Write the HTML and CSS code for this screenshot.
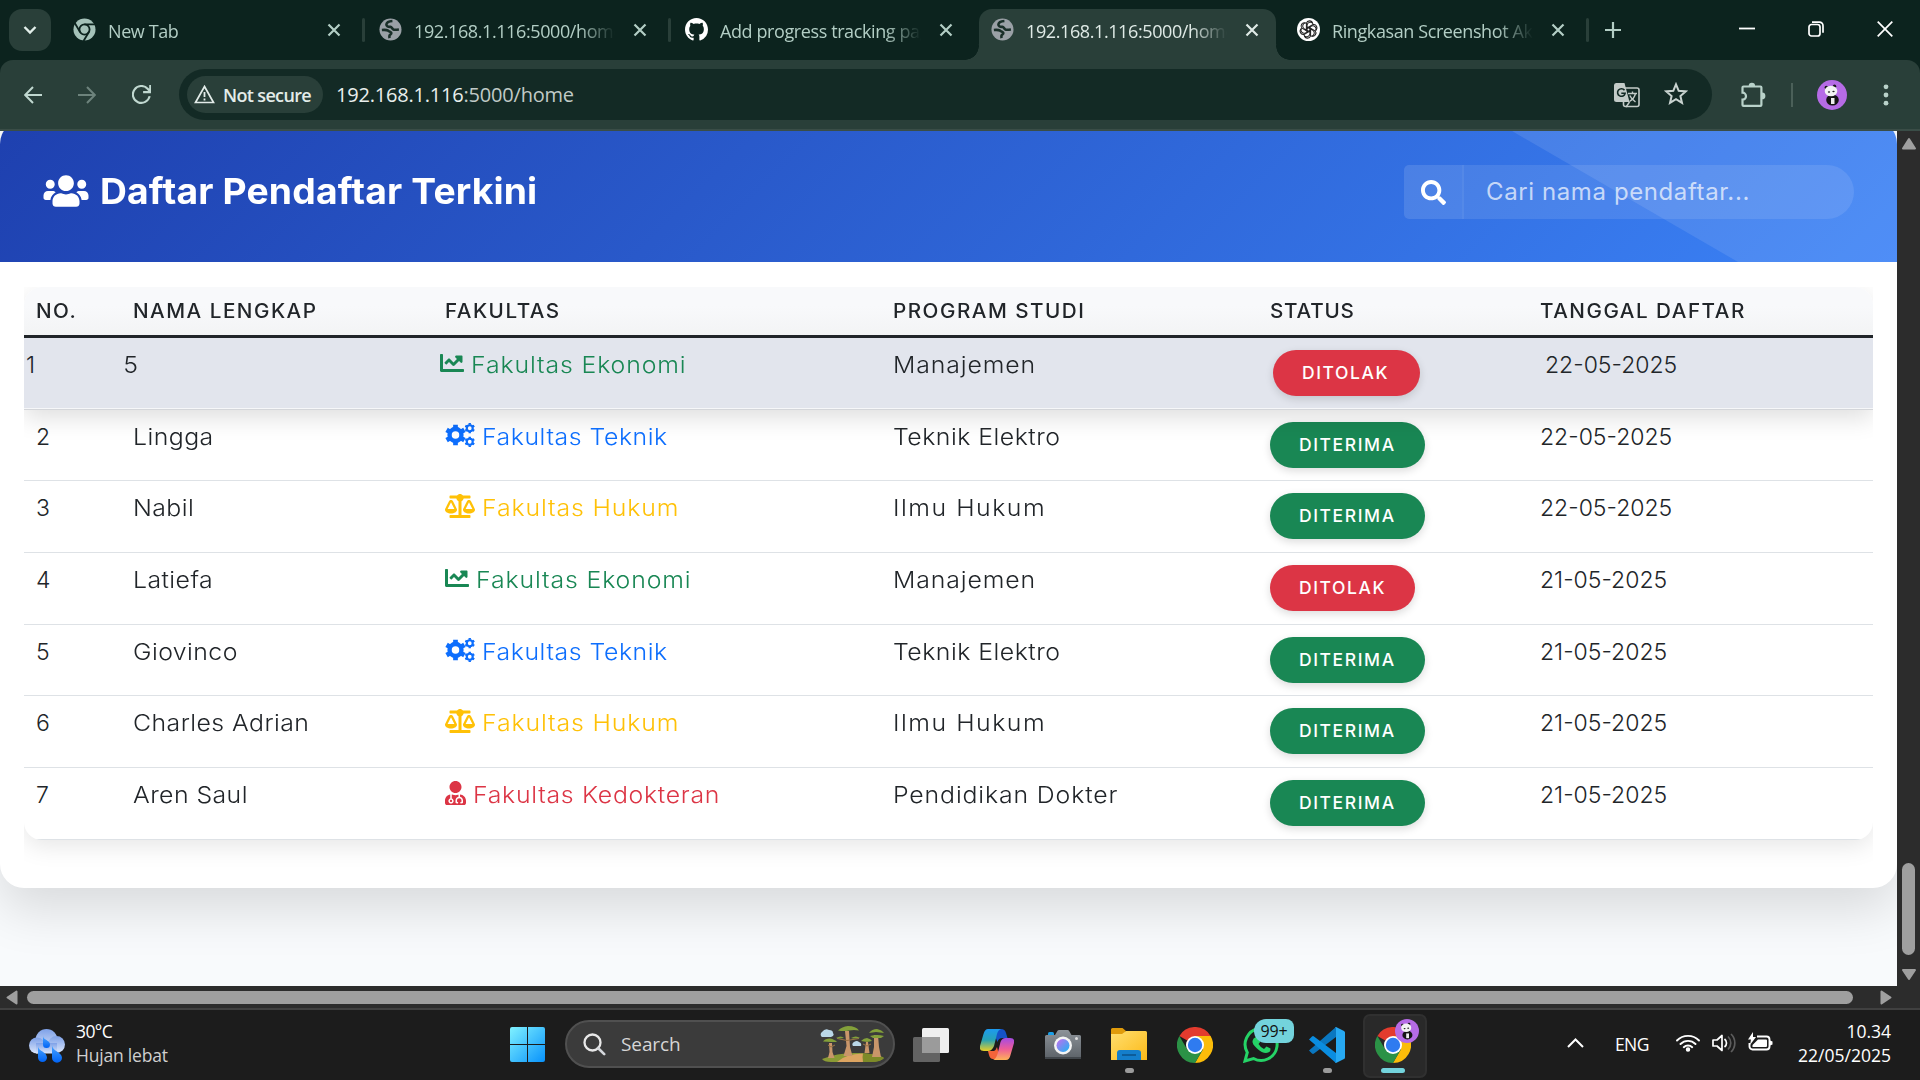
FILE: index.html
```html
<!DOCTYPE html>
<html lang="id">
<head>
<meta charset="utf-8">
<title>Daftar Pendaftar Terkini</title>
<link rel="stylesheet" href="styles.css">
</head>
<body>
<svg class="defs" aria-hidden="true">
  <defs>
    <symbol id="close" viewBox="0 0 14 14"><path d="M1.500 1.500l11 11M12.500 1.500l-11 11" stroke="currentColor" stroke-width="2.200" fill="none"/></symbol>
    <symbol id="globe" viewBox="0 0 24 24"><circle cx="12" cy="12" r="11.500" fill="#9aa0a6"/><path d="M14 3.200c-3 .2-6 1.500-6.300 3.600-.2 1.800 1.800 2.600 4.300 2.400 1.500 0 1.500 2.600 3.500 3 1.800.3 3.800 0 5.300-.2M3 12.500c2.500-.2 5-.3 6.500.6 1.200 1.200 2.500 1.300 3.300 2.300.6 1.400-1.300 1.800-1.800 2.800-.3 1-.2 1.800 0 2.800" fill="none" stroke="#1a2f29" stroke-width="2.700"/></symbol>
    <symbol id="line" viewBox="0 0 512 512"><path fill="currentColor" d="M496 384H64V80c0-8.840-7.160-16-16-16H16C7.160 64 0 71.160 0 80v336c0 17.670 14.330 32 32 32h464c8.840 0 16-7.160 16-16v-32c0-8.840-7.160-16-16-16zM464 96H345.940c-21.380 0-32.090 25.850-16.970 40.970l32.400 32.400L288 242.750l-73.370-73.370c-12.500-12.500-32.760-12.500-45.250 0l-68.690 68.690c-6.250 6.250-6.250 16.380 0 22.630l22.620 22.620c6.250 6.250 16.380 6.250 22.630 0L192 237.250l73.370 73.370c12.500 12.500 32.760 12.500 45.250 0l96-96 32.400 32.400c15.120 15.120 40.970 4.410 40.970-16.970V112c.01-8.840-7.150-16-15.990-16z"/></symbol>
    <symbol id="scale" viewBox="0 0 640 512"><path fill="currentColor" d="M256 336h-.02c0-16.180 1.340-8.730-85.050-181.510-17.650-35.290-68.190-35.360-85.870 0C-2.060 328.750.02 320.330.02 336H0c0 44.180 57.310 80 128 80s128-35.820 128-80zM128 176l72 144H56l72-144zm511.980 160c0-16.180 1.340-8.730-85.050-181.510-17.650-35.290-68.190-35.360-85.870 0-87.120 174.260-85.040 165.840-85.040 181.510H384c0 44.180 57.310 80 128 80s128-35.820 128-80h-.02zM440 320l72-144 72 144H440zm88 128H352V153.250c23.510-10.290 41.160-31.480 46.390-57.250H528c8.840 0 16-7.160 16-16V48c0-8.840-7.160-16-16-16H383.640C369.040 12.680 346.090 0 320 0s-49.040 12.680-63.640 32H112c-8.840 0-16 7.160-16 16v32c0 8.840 7.160 16 16 16h129.610c5.230 25.760 22.870 46.960 46.390 57.250V448H112c-8.840 0-16 7.160-16 16v32c0 8.840 7.160 16 16 16h416c8.840 0 16-7.160 16-16v-32c0-8.840-7.160-16-16-16z"/></symbol>
    <symbol id="gear" viewBox="-12 -12 24 24"><g fill="none" stroke="currentColor"><circle r="6.800" stroke-width="5"/><path d="M0-8V-11.800M0 8V11.800M6.930-4L10.200-5.900M6.930 4L10.200 5.900M-6.930-4L-10.200-5.900M-6.930 4L-10.200 5.900" stroke-width="5.400"/></g></symbol>
    <symbol id="gears" viewBox="0 0 30 24"><use href="#gear" x="0" y="1" width="21" height="22"/><use href="#gear" x="19.500" y="0" width="10.500" height="10.500"/><use href="#gear" x="19.500" y="13.500" width="10.500" height="10.500"/></symbol>
    <symbol id="doctor" viewBox="0 0 448 512"><path fill="currentColor" d="M224 256c70.700 0 128-57.300 128-128S294.700 0 224 0 96 57.300 96 128s57.300 128 128 128zM104 424c0 13.300 10.700 24 24 24s24-10.700 24-24-10.700-24-24-24-24 10.700-24 24zm216-135.400v49c36.500 7.400 64 39.800 64 78.400v41.700c0 7.600-5.400 14.200-12.900 15.700l-32.200 6.400c-4.300.9-8.500-1.900-9.400-6.300l-3.100-15.700c-.9-4.300 1.900-8.600 6.300-9.400l19.300-3.900V416c0-62.800-96-65.100-96 1.900v26.700l19.300 3.900c4.300.9 7.100 5.100 6.300 9.400l-3.100 15.700c-.9 4.300-5.100 7.100-9.400 6.300l-31.200-4.200c-7.900-1.100-13.800-7.800-13.800-15.900V416c0-38.600 27.500-70.900 64-78.400v-45.200c-2.200.7-4.400 1.100-6.600 1.900-18 6.300-37.300 9.800-57.400 9.800s-39.400-3.500-57.400-9.800c-7.400-2.600-14.900-4.200-22.600-5.200v81.600c23.100 6.900 40 28.100 40 53.400 0 30.900-25.100 56-56 56s-56-25.100-56-56c0-25.300 16.900-46.500 40-53.400v-80.400C48.500 301 0 355.800 0 422.400v44.800C0 491.900 20.100 512 44.800 512h358.400c24.700 0 44.800-20.100 44.800-44.800v-44.800c0-72-56.800-130.300-128-133.800z"/></symbol>
    <symbol id="panda" viewBox="0 0 30 30"><circle cx="15" cy="15" r="15" fill="#b66be6"/><ellipse cx="15.500" cy="20" rx="6.300" ry="5.500" fill="#151515"/><path d="M14 18h3.500v6H14z" fill="#eee"/><circle cx="9.300" cy="7.500" r="1.700" fill="#151515"/><circle cx="17.500" cy="6.300" r="1.700" fill="#151515"/><ellipse cx="14" cy="11" rx="6.300" ry="5.300" fill="#f3f3f3"/><ellipse cx="12" cy="12" rx="1.200" ry=".8" fill="#222"/><ellipse cx="16.500" cy="11.500" rx="1.200" ry=".8" fill="#222"/></symbol>
    <symbol id="chrome" viewBox="0 0 36 36"><path d="M18 18L2.400 9A18 18 0 0 1 33.600 9H18z" fill="#e33b2e"/><path d="M18 9H33.600A18 18 0 0 1 18 36l7.800-13.500z" fill="#fbbc09"/><path d="M25.800 22.500L18 36A18 18 0 0 1 2.400 9l7.800 13.500z" fill="#2b9246"/><circle cx="18" cy="18" r="9" fill="#fff"/><circle cx="18" cy="18" r="7.200" fill="#2f7bf0"/></symbol>
    <linearGradient id="win" x1="0" y1="0" x2="1" y2="1"><stop offset="0" stop-color="#80f2ff"/><stop offset="1" stop-color="#0892fb"/></linearGradient>
    <linearGradient id="cloud" x1="0" y1="0" x2="0" y2="1"><stop offset="0" stop-color="#7ea1e8"/><stop offset="1" stop-color="#dbe6fb"/></linearGradient>
    <linearGradient id="drop" x1="0" y1="0" x2="0" y2="1"><stop offset="0" stop-color="#4aa5ff"/><stop offset="1" stop-color="#0063f5"/></linearGradient>
    <linearGradient id="copA" x1="0" y1="0" x2="0" y2="1"><stop offset="0" stop-color="#1d9af0"/><stop offset=".5" stop-color="#27a3b5"/><stop offset="1" stop-color="#e9cf25"/></linearGradient>
    <linearGradient id="copB" x1="0" y1="0" x2="0" y2="1"><stop offset="0" stop-color="#a54be4"/><stop offset=".5" stop-color="#ee5c98"/><stop offset="1" stop-color="#ffb257"/></linearGradient>
    <linearGradient id="lens" x1="0" y1="0" x2="1" y2="1"><stop offset="0" stop-color="#c76cf0"/><stop offset="1" stop-color="#18b6f2"/></linearGradient>
    <linearGradient id="folder" x1="0" y1="0" x2="1" y2="1"><stop offset="0" stop-color="#ffdf70"/><stop offset="1" stop-color="#fcb917"/></linearGradient>
    <linearGradient id="body" x1="0" y1="0" x2="0" y2="1"><stop offset="0" stop-color="#8d9399"/><stop offset="1" stop-color="#5c6268"/></linearGradient>
  </defs>
</svg>

<header class="tabstrip">
  <button class="tab-menu"><svg width="14" height="10" viewBox="0 0 14 10"><path d="M1.500 2l5.500 5.500L12.500 2" fill="none" stroke="#e2efea" stroke-width="2.400"/></svg></button>
  <div class="tab">
    <svg class="fav" viewBox="0 0 24 24"><circle cx="12" cy="12" r="11.500" fill="#a5c2b9"/><circle cx="12" cy="12" r="5.300" fill="none" stroke="#0c231e" stroke-width="1.900"/><path d="M12 6.700H23M7.400 14.700L2 5.500M16.600 14.700L11 24" stroke="#0c231e" stroke-width="1.900"/></svg>
    <span class="tab-title">New Tab</span><svg class="x"><use href="#close"/></svg>
  </div>
  <div class="tab sep">
    <svg class="fav"><use href="#globe"/></svg>
    <span class="tab-title">192.168.1.116:5000/home</span><svg class="x"><use href="#close"/></svg>
  </div>
  <div class="tab sep">
    <svg class="fav" viewBox="0 0 16 16"><path fill="#fff" d="M8 0C3.580 0 0 3.580 0 8c0 3.540 2.290 6.530 5.470 7.590.4.070.55-.17.55-.38 0-.19-.01-.82-.01-1.490-2.010.37-2.530-.49-2.690-.94-.09-.23-.48-.94-.82-1.130-.28-.15-.68-.52-.01-.53.63-.01 1.080.58 1.230.82.72 1.210 1.870.87 2.330.66.07-.52.28-.87.51-1.070-1.780-.2-3.640-.89-3.640-3.950 0-.87.31-1.590.82-2.150-.08-.2-.36-1.020.08-2.120 0 0 .67-.21 2.200.82.64-.18 1.320-.27 2-.27s1.360.09 2 .27c1.530-1.040 2.200-.82 2.200-.82.44 1.100.16 1.920.08 2.120.51.56.82 1.270.82 2.150 0 3.070-1.870 3.750-3.650 3.950.29.25.54.73.54 1.480 0 1.070-.01 1.930-.01 2.200 0 .21.15.46.55.38A8.010 8.010 0 0 0 16 8c0-4.420-3.580-8-8-8z"/></svg>
    <span class="tab-title">Add progress tracking page</span><svg class="x"><use href="#close"/></svg>
  </div>
  <div class="tab active">
    <svg class="fav"><use href="#globe"/></svg>
    <span class="tab-title">192.168.1.116:5000/home</span><svg class="x"><use href="#close"/></svg>
  </div>
  <div class="tab">
    <svg class="fav" viewBox="-12 -12 24 24"><circle r="12" fill="#fff"/><g fill="none" stroke="#222" stroke-width="1.100"><path id="petal" d="M-1.500 3.400V-4.500A3.400 3.400 0 0 1 4.800-5.900M-1.500-1.700L4.700-5.200A3.300 3.300 0 0 1 7.600.5"/><use href="#petal" transform="rotate(60)"/><use href="#petal" transform="rotate(120)"/><use href="#petal" transform="rotate(180)"/><use href="#petal" transform="rotate(240)"/><use href="#petal" transform="rotate(300)"/></g></svg>
    <span class="tab-title">Ringkasan Screenshot Aktivitas</span><svg class="x"><use href="#close"/></svg>
  </div>
  <div class="new-tab"><svg width="16" height="16" viewBox="0 0 16 16"><path d="M8 0v16M0 8h16" stroke="#b3cec5" stroke-width="2.200"/></svg></div>
  <div class="win-buttons">
    <svg width="16" height="16" viewBox="0 0 16 16"><path d="M0 7.500h16" stroke="#fff" stroke-width="1.800"/></svg>
    <svg width="16" height="16" viewBox="0 0 16 16" fill="none" stroke="#fff" stroke-width="1.700"><rect x="1" y="3.500" width="11" height="11.500" rx="2.500"/><path d="M4 1.200h7.500a3.500 3.500 0 0 1 3.500 3.500v7"/></svg>
    <svg width="16" height="16" viewBox="0 0 16 16"><path d="M.7.7l14.600 14.600M15.300.7L.7 15.300" stroke="#fff" stroke-width="1.700"/></svg>
  </div>
</header>

<nav class="toolbar">
  <svg class="nav back" viewBox="0 0 18 18"><path d="M18 9H1.500M9 1L1.200 9 9 17" fill="none" stroke="#c0d8d0" stroke-width="2"/></svg>
  <svg class="nav forward" viewBox="0 0 18 18"><path d="M0 9h16.500M9 1l7.800 8L9 17" fill="none" stroke="#6d837c" stroke-width="2"/></svg>
  <svg class="nav reload" viewBox="0 0 18 18"><path d="M16.700 10.500A8 8 0 1 1 14.800 3.600L17 6M17.300 0v6.700h-6.800" fill="none" stroke="#c0d8d0" stroke-width="2"/></svg>
  <div class="omnibox">
    <div class="chip"><svg width="21" height="19" viewBox="0 0 21 19"><path d="M10.500 1.500L19.500 17.500H1.500z" fill="none" stroke="#e3ece9" stroke-width="1.700"/><path d="M10.500 7v5M10.500 13.500v2" stroke="#e3ece9" stroke-width="1.800"/></svg><span>Not secure</span></div>
    <div class="url">192.168.1.116<span>:5000/home</span></div>
    <svg class="translate" width="26" height="26" viewBox="0 0 26 26"><rect x="9.500" y="6" width="15.500" height="18.500" rx="2" fill="none" stroke="#c3cbc8" stroke-width="1.600"/><path d="M2 1h8.500l5 19H2.500A2.500 2.500 0 0 1 0 17.500V3.200A2.200 2.200 0 0 1 2 1z" fill="#c3cbc8"/><path d="M10.500 8.300a3.800 3.800 0 1 0 .6 3H7.300" fill="none" stroke="#132a25" stroke-width="1.600"/><path d="M14 11.500h9M18.500 9.500v2M21.500 11.500c-1 4-3.500 6.500-6 8M15.800 13.500c1 2.500 3 4.500 5.700 6.500M15.500 20l-3.500 5" fill="none" stroke="#c3cbc8" stroke-width="1.400"/></svg>
    <svg class="star" width="24" height="23" viewBox="0 0 24 23"><path d="M12 2.300l2.700 6.500 7 .6-5.300 4.600 1.600 6.900-6-3.700-6 3.700 1.600-6.900L2.300 9.400l7-.6z" fill="none" stroke="#c9d3d0" stroke-width="2"/></svg>
  </div>
  <svg class="puzzle" width="26" height="26" viewBox="0 0 26 26"><path d="M2.500 5.500a1 1 0 0 1 1-1H20.400a1 1 0 0 1 1 1v17.400a1 1 0 0 1-1 1H3.500a1 1 0 0 1-1-1v-5.200a3.500 3.500 0 0 0 0-7z" fill="none" stroke="#b9d2ca" stroke-width="2.200"/><path d="M8.700 4a3.200 3.200 0 0 1 6.400 0zM22 10.500a3.400 3.400 0 0 1 0 6.800z" fill="#b9d2ca"/></svg>
  <i class="bar"></i>
  <svg class="avatar" width="30" height="30"><use href="#panda"/></svg>
  <svg class="dots" width="6" height="22" viewBox="0 0 6 22" fill="#b9d2ca"><circle cx="3" cy="2.800" r="2.400"/><circle cx="3" cy="11" r="2.400"/><circle cx="3" cy="19.200" r="2.400"/></svg>
</nav>

<main class="viewport">
  <div class="page">
    <section class="card">
      <div class="card-head">
        <h1><svg width="46" height="36" viewBox="0 0 640 512"><path fill="#fff" d="M96 224c35.300 0 64-28.700 64-64s-28.700-64-64-64-64 28.700-64 64 28.700 64 64 64zm448 0c35.300 0 64-28.700 64-64s-28.700-64-64-64-64 28.700-64 64 28.700 64 64 64zm32 32h-64c-17.600 0-33.500 7.100-45.100 18.600 40.300 22.100 68.900 62 75.100 109.400h66c17.700 0 32-14.300 32-32v-32c0-35.300-28.700-64-64-64zm-256 0c61.900 0 112-50.100 112-112S381.900 32 320 32 208 82.100 208 144s50.100 112 112 112zm76.800 32h-8.300c-20.800 10-43.900 16-68.500 16s-47.600-6-68.500-16h-8.300C179.600 288 128 339.600 128 403.200V432c0 26.500 21.500 48 48 48h288c26.500 0 48-21.500 48-48v-28.800c0-63.600-51.600-115.200-115.200-115.200zm-223.700-13.400C161.500 263.100 145.600 256 128 256H64c-35.300 0-64 28.700-64 64v32c0 17.700 14.300 32 32 32h65.900c6.300-47.400 34.900-87.300 75.200-109.400z"/></svg><span>Daftar Pendaftar Terkini</span></h1>
        <div class="search">
          <div class="search-icon"><svg width="25" height="25" viewBox="0 0 512 512"><path fill="#fff" d="M505 442.700L405.300 343c-4.500-4.500-10.600-7-17-7H372c27.600-35.300 44-79.700 44-128C416 93.100 322.900 0 208 0S0 93.100 0 208s93.100 208 208 208c48.300 0 92.700-16.400 128-44v16.300c0 6.400 2.500 12.500 7 17l99.700 99.700c9.400 9.400 24.600 9.400 33.900 0l28.300-28.300c9.400-9.400 9.400-24.600.1-34zM208 336c-70.700 0-128-57.200-128-128 0-70.700 57.200-128 128-128 70.700 0 128 57.200 128 128 0 70.700-57.200 128-128 128z"/></svg></div>
          <div class="search-field">Cari nama pendaftar...</div>
        </div>
      </div>
      <div class="table-wrap">
        <div class="table">
          <div class="row head"><div>NO.</div><div>NAMA LENGKAP</div><div>FAKULTAS</div><div>PROGRAM STUDI</div><div class="tight">STATUS</div><div>TANGGAL DAFTAR</div></div>
          <div class="row hover"><div>1</div><div class="name">5</div><div class="eko"><svg><use href="#line"/></svg><span>Fakultas Ekonomi</span></div><div class="prog">Manajemen</div><div><b class="badge no">DITOLAK</b></div><div class="date">22-05-2025</div></div>
          <div class="row"><div>2</div><div class="name">Lingga</div><div class="tek"><svg><use href="#gears"/></svg><span>Fakultas Teknik</span></div><div class="prog narrow">Teknik Elektro</div><div><b class="badge yes">DITERIMA</b></div><div class="date">22-05-2025</div></div>
          <div class="row"><div>3</div><div class="name">Nabil</div><div class="huk"><svg><use href="#scale"/></svg><span>Fakultas Hukum</span></div><div class="prog wide">Ilmu Hukum</div><div><b class="badge yes">DITERIMA</b></div><div class="date">22-05-2025</div></div>
          <div class="row"><div>4</div><div class="name">Latiefa</div><div class="eko"><svg><use href="#line"/></svg><span>Fakultas Ekonomi</span></div><div class="prog">Manajemen</div><div><b class="badge no">DITOLAK</b></div><div class="date">21-05-2025</div></div>
          <div class="row"><div>5</div><div class="name">Giovinco</div><div class="tek"><svg><use href="#gears"/></svg><span>Fakultas Teknik</span></div><div class="prog narrow">Teknik Elektro</div><div><b class="badge yes">DITERIMA</b></div><div class="date">21-05-2025</div></div>
          <div class="row"><div>6</div><div class="name">Charles Adrian</div><div class="huk"><svg><use href="#scale"/></svg><span>Fakultas Hukum</span></div><div class="prog wide">Ilmu Hukum</div><div><b class="badge yes">DITERIMA</b></div><div class="date">21-05-2025</div></div>
          <div class="row"><div>7</div><div class="name">Aren Saul</div><div class="ked"><svg><use href="#doctor"/></svg><span>Fakultas Kedokteran</span></div><div class="prog">Pendidikan Dokter</div><div><b class="badge yes">DITERIMA</b></div><div class="date">21-05-2025</div></div>
        </div>
      </div>
    </section>
  </div>
  <div class="vscroll">
    <svg width="16" height="13" viewBox="0 0 16 13"><path d="M8 2l6 9.500H2z" fill="#9f9f9f" stroke="#9f9f9f" stroke-width="2" stroke-linejoin="round"/></svg>
    <i></i>
    <svg width="16" height="13" viewBox="0 0 16 13"><path d="M8 11l6-9H2z" fill="#9f9f9f" stroke="#9f9f9f" stroke-width="2" stroke-linejoin="round"/></svg>
  </div>
</main>
<div class="hscroll">
  <svg width="12" height="15" viewBox="0 0 12 15"><path d="M1.500 7.500L10.500 1.500v12z" fill="#9f9f9f" stroke="#9f9f9f" stroke-width="2" stroke-linejoin="round"/></svg>
  <i></i>
  <svg width="12" height="15" viewBox="0 0 12 15"><path d="M10.500 7.500L1.500 1.500v12z" fill="#9f9f9f" stroke="#9f9f9f" stroke-width="2" stroke-linejoin="round"/></svg>
</div>

<footer class="taskbar">
  <div class="weather">
    <svg width="36" height="34" viewBox="0 0 36 34"><g fill="url(#cloud)"><circle cx="17.500" cy="11" r="11"/><circle cx="8" cy="16.500" r="8"/><circle cx="27.500" cy="15.500" r="8.500"/><rect x="7" y="14" width="21" height="10.500"/></g><g fill="url(#drop)"><path d="M14 7c0 4 7 4 7 8.500a3.500 3.500 0 0 1-7 0z"/><path d="M9 17c0 5 9 6 9 11.500a4.500 4.500 0 0 1-9 0z"/><path d="M23 16c0 6 10 7 10 12.800a5 5 0 0 1-10 0z"/></g></svg>
    <div><div class="temp">30°C</div><div class="cond">Hujan lebat</div></div>
  </div>
  <div class="apps">
    <div class="app"><svg width="35" height="35" viewBox="0 0 35 35"><path d="M2 0h15v17H0V2a2 2 0 0 1 2-2zM18 0h15a2 2 0 0 1 2 2v15H18zM0 18h17v17H2a2 2 0 0 1-2-2zM18 18h17v15a2 2 0 0 1-2 2H18z" fill="url(#win)"/></svg></div>
    <div class="find">
      <svg width="23" height="23" viewBox="0 0 23 23"><circle cx="9.500" cy="9.500" r="8" fill="none" stroke="#e8e8e8" stroke-width="2.300"/><path d="M15 15l6.200 6.200" stroke="#d5d8dc" stroke-width="2.600" stroke-linecap="round"/></svg>
      <span>Search</span>
      <svg class="trees" width="66" height="37" viewBox="0 0 66 37"><path d="M3 33Q20 26 40 27T65 32Q62 36 50 36H12Q5 36 3 33z" fill="#8a9a35"/><path d="M18 36Q26 28 44 27.500V36z" fill="#dca461"/><path d="M44 36q-1-5 0-8.500 12 0 21 4.500-4 4-12 4z" fill="#7d8a28"/><g fill="#c9966a"><path d="M26 5l4 0 1 16 2.500 9h-9l3-10z"/><path d="M55 9h4l1 12 2 10h-9l2-10z"/><path d="M10 17h3l.5 9 2 6H9l1.500-6z"/><path d="M47 16h2l1.500 11h-5z"/></g><path d="M18 12.500l10 2 12-2M9 19l3 2 4-2M44 18l4 2 4-2" fill="none" stroke="#9c7345" stroke-width="1"/><g fill="#83a03a"><path d="M19 4.500q4-4 10-4.500 8 0 11 4.500-5-1-10 0t-11 0z"/><path d="M17 12q5-3 8 0l-5 .5zM32 12q5-3 9 0l-7 .5z"/><path d="M50 7q3-4 8-4 5 1 7 4l-8-1zM51 10q7-2 14 0l-3 2H54z"/><path d="M4 15.500q2-3 7-3 5 1 7 3.500H12z"/><path d="M42 15q3-3 6-3 4 1 5 3l-5 1z"/></g><path d="M3 11a3 3 0 0 1 0-5q3-4 7-2 4 0 4 3 2 3-2 4zM34 20a2.500 2.500 0 0 1 1-4q3-2 5 0 3 1 2 4z" fill="#bad8e8"/></svg>
    </div>
    <div class="app"><svg width="36" height="34" viewBox="0 0 36 34"><rect x="9" y="0" width="27" height="25" rx="1.500" fill="#efefef"/><rect x="0" y="9" width="27" height="25" rx="1.500" fill="#636363"/><rect x="9" y="9" width="18" height="16" fill="#9b9b9b"/></svg></div>
    <div class="app"><svg width="34" height="31" viewBox="0 0 34 31"><path d="M12 0h9q4 0 5 4l1.500 5h-5q-4 0-5 4z" fill="#1553c8"/><path d="M8 0h13q-3 1-4 5l-3 12q-2 5-6 5H4q-5 0-4-5L3.500 5Q5 0 8 0z" fill="url(#copA)"/><path d="M8 22h6q2-1 3-4l3 12h-7q-3 0-4-4z" fill="#f4643a"/><path d="M26 31H13q3-1 4.500-6l3-12q1.500-4 5-4H30q5 0 4 5l-3.500 12Q29.500 31 26 31z" fill="url(#copB)"/></svg></div>
    <div class="app"><svg width="36" height="30" viewBox="0 0 36 30"><rect x="3" y="2" width="6" height="5" rx="1.500" fill="#1aa0e8"/><path d="M1.500 5H10l2.500-4.200Q13 0 14 0h8.500q1 0 1.500.8L26.500 5h8A1.500 1.500 0 0 1 36 6.500V29H0V6.500A1.500 1.500 0 0 1 1.500 5z" fill="url(#body)"/><path d="M0 27h36v2H0z" fill="#41464b"/><circle cx="18" cy="15.500" r="9" fill="#f4f4f4"/><circle cx="18" cy="15.500" r="6.500" fill="url(#lens)"/><circle cx="31.500" cy="8.500" r="1.500" fill="#ddd"/></svg></div>
    <div class="app"><svg width="36" height="33" viewBox="0 0 36 33"><path d="M0 1.500A1.500 1.500 0 0 1 1.500 0h10l3.500 3-3 4H0z" fill="#e09b0b"/><path d="M0 6h11l4-3h19.500A1.500 1.500 0 0 1 36 4.500V32H0z" fill="url(#folder)"/><path d="M6 32v-7q0-3 3-3h18q3 0 3 3v7z" fill="#147ecb"/><path d="M11 27h14" stroke="#0b5288" stroke-width="1.500"/></svg><i class="dot"></i></div>
    <div class="app"><svg width="36" height="36"><use href="#chrome"/></svg></div>
    <div class="app"><svg width="36" height="36" viewBox="0 0 36 36"><path d="M2 34l2.300-8.500A16 16 0 1 1 10.500 31.500z" fill="none" stroke="#25d366" stroke-width="3"/><path d="M13 10l3 .5 1.500 4-2 2.500q2 3.500 5.500 5l2.500-2.500 4 2q.5 4-4.500 4.500-4 0-9-4.500T9.500 14q.5-3 3.500-4z" fill="#25d366"/></svg><b class="count">99+</b></div>
    <div class="app"><svg width="36" height="36" viewBox="0 0 36 36"><path d="M0 23.500l3 3q1 .8 2 0L27 10V0z" fill="#0a77c0"/><path d="M0 12.500l3-3q1-.8 2 0L27 26v10z" fill="#0a8de0"/><path d="M26 0q.6-.2 1 0l8 4q1 .5 1 1.500v25q0 1-1 1.500l-8 4q-.6.200-1 0l1-1V1z" fill="#27a9f2"/></svg><i class="dot"></i></div>
    <div class="app current"><svg width="36" height="36"><use href="#chrome"/></svg><svg class="mini" width="24" height="24"><use href="#panda"/></svg><i class="dot"></i></div>
  </div>
  <div class="tray">
    <svg class="chev" width="17" height="10" viewBox="0 0 17 10"><path d="M1 9l7.500-7.500L16 9" fill="none" stroke="#fff" stroke-width="2"/></svg>
    <span class="lang">ENG</span>
    <svg class="wifi" width="24" height="18" viewBox="0 0 24 18" fill="none" stroke="#fff" stroke-width="1.900" stroke-linecap="round"><path d="M1 6.500a15.500 15.500 0 0 1 22 0M4.500 10a10.600 10.600 0 0 1 15 0M7.800 13.200a6 6 0 0 1 8.400 0"/><circle cx="12" cy="15.500" r="1.300" fill="#fff"/></svg>
    <svg class="vol" width="24" height="20" viewBox="0 0 24 20" fill="none" stroke="#fff" stroke-width="1.700"><path d="M1 7h4l5-4.500v15L5 13H1z" stroke-linejoin="round"/><path d="M12.500 6a5 5 0 0 1 0 8"/><g stroke="#5d5d5d"><path d="M16 3.500a9 9 0 0 1 0 13M19 1a12.500 12.500 0 0 1 0 18"/></g></svg>
    <svg class="batt" width="25" height="20" viewBox="0 0 25 20"><path d="M9 4.500h9.500a3 3 0 0 1 3 3v7a3 3 0 0 1-3 3h-14a3 3 0 0 1-3-3V11" fill="none" stroke="#fff" stroke-width="1.900"/><path d="M10 7.500h8a1 1 0 0 1 1 1v5.500a1 1 0 0 1-1 1H4.500V13zM22 8.500l2.500 1v3L22 13.500zM5 0L0 7.500h3L2 13l6-8H5z" fill="#fff"/></svg>
    <div class="clock"><div>10.34</div><div>22/05/2025</div></div>
  </div>
</footer>
</body>
</html>
```

FILE: styles.css
```css
* { box-sizing: border-box; }
html, body { margin: 0; width: 1920px; height: 1080px; overflow: hidden; }
body { display: flex; flex-direction: column; font-family: "Open Sans", "Noto Sans", sans-serif; background: #0c231e; color: #fff; }
svg { display: block; flex: none; }
.defs { position: absolute; width: 0; height: 0; }
i { display: block; }

/* Tab strip */
.tabstrip { display: flex; height: 60px; background: #0c231e; padding-left: 9px; flex: none; }
.tab-menu { width: 42px; height: 42px; margin: 9px 10px 0 0; border: 0; border-radius: 13px; background: #293f39; display: grid; place-items: center; padding: 0; }
.tab { position: relative; display: flex; align-items: center; width: 306px; height: 42px; margin-top: 9px; padding-left: 12px; flex: none; color: #b3cec5; }
.fav { width: 23px; height: 23px; margin-right: 12px; margin-bottom: 1px; }
.tab-title { width: 201px; overflow: hidden; white-space: nowrap; font-size: 18px; line-height: 26px; letter-spacing: -.4px; padding-top: 2px; -webkit-mask-image: linear-gradient(90deg, #000 165px, transparent 201px); mask-image: linear-gradient(90deg, #000 165px, transparent 201px); }
.x { width: 14px; height: 14px; margin-left: 18px; margin-bottom: 1px; }
.tab.sep::before { content: ""; position: absolute; left: -5px; top: 9px; width: 3px; height: 24px; border-radius: 2px; background: #293f39; }
.tab.active { width: 297px; height: 51px; padding-bottom: 9px; border-radius: 13px 13px 0 0; background: #293f39; color: #dfeae6; margin-right: 9px; }
.tab.active::before, .tab.active::after { content: ""; position: absolute; bottom: 0; width: 14px; height: 16px; }
.tab.active::before { left: -14px; background: radial-gradient(circle 14px at 0 2px, transparent 13.500px, #293f39 14px); }
.tab.active::after { right: -14px; background: radial-gradient(circle 14px at 14px 2px, transparent 13.500px, #293f39 14px); }
.new-tab { width: 60px; margin: 9px 0 0 1px; height: 42px; position: relative; padding: 13px 0 0 13px; }
.new-tab::before { content: ""; position: absolute; left: -6px; top: 9px; width: 3px; height: 24px; border-radius: 2px; background: #293f39; }
.win-buttons { display: flex; gap: 53px; margin-left: auto; padding: 21px 27px 0 0; }

/* Toolbar */
.toolbar { display: flex; align-items: center; height: 71px; flex: none; padding: 0 0 0 24px; background: #293f39; border-radius: 13px 13px 0 0; border-bottom: 2px solid #3a4d47; }
.nav { width: 18px; height: 18px; }
.forward { margin-left: 36px; }
.reload { margin-left: 36px; width: 19px; height: 19px; }
.omnibox { display: flex; flex: none; align-items: center; width: 1533px; height: 51px; margin-left: 28px; padding-left: 8px; border-radius: 26px; background: #132a25; }
.chip { display: flex; align-items: center; width: 136px; height: 37px; border-radius: 19px; background: #293f39; padding-left: 7px; gap: 8px; font-size: 18px; font-weight: 600; letter-spacing: -.65px; color: #e3ece9; white-space: nowrap; }
.url { margin: -1px 0 0 13px; font-size: 20px; letter-spacing: -.2px; color: #e9efed; }
.url span { color: #c0cac7; }
.translate { margin-left: auto; }
.star { margin: 0 24px 2px 24px; }
.puzzle { margin-left: 28px; }
.bar { width: 2px; height: 24px; margin: 0 24px 0 25px; background: #4b6059; }
.dots { margin-left: 36px; }

/* Page viewport */
.viewport { display: flex; height: 855px; flex: none; overflow: hidden; }
.page { width: 1897px; height: 855px; overflow: hidden; background: #f8fafc; font-family: Inter, "Liberation Sans", sans-serif; }
.card { height: 768px; margin-top: -11px; border-radius: 24px; background: #fff; box-shadow: 0 22px 50px rgba(0, 0, 0, .125); overflow: hidden; }
.card-head { position: relative; display: flex; justify-content: space-between; height: 142px; padding: 45px 43px 0; background: linear-gradient(135deg, #1e40af 0%, #3b82f6 100%); }
.card-head::after { content: ""; position: absolute; inset: 0; background: rgba(255, 255, 255, .1); clip-path: polygon(1493px 0, 100% 0, 100% 100%, 1738px 100%); }
h1 { display: flex; align-items: center; gap: 11px; height: 52px; margin: 0; font-size: 35.500px; font-weight: 650; letter-spacing: .15px; white-space: nowrap; }
h1 span { transform: scaleX(1.05); transform-origin: left; }
.search { display: flex; width: 450px; height: 54px; border-radius: 5px 27px 27px 5px; overflow: hidden; }
.search-icon { display: grid; place-items: center; width: 58px; padding-right: 3px; background: rgba(255, 255, 255, .12); }
.search-icon svg { margin-left: 4px; }
.search-field { flex: 1; border-left: 2px solid rgba(255, 255, 255, .07); padding-left: 22px; background: rgba(255, 255, 255, .1); font-size: 24px; line-height: 53px; letter-spacing: .6px; color: rgba(255, 255, 255, .7); white-space: nowrap; }

/* Registrants table */
.table-wrap { margin: 25px 24px 0; padding-bottom: 32px; overflow: hidden; }
.table { height: 553px; border-radius: 18px; overflow: hidden; background: #fff; box-shadow: 0 6px 24px rgba(0, 0, 0, .1); }
.row { display: grid; grid-template-columns: 97px 312px 448px 377px 270px 345px; height: 71.700px; border-bottom: 1px solid #dee2e6; font-size: 23px; line-height: 36px; color: #212529; font-weight: 350; white-space: nowrap; }
.row > div { padding: 9px 12px 0; display: flex; align-items: flex-start; }
.row.head { height: 51px; border-bottom: 3px solid #212529; background: linear-gradient(#f8f9fb 40%, #f3f4f5); font-size: 19.500px; font-weight: 550; letter-spacing: 1.400px; line-height: 32px; }
.row.head > div { padding-top: 8px; transform: scaleX(1.06); transform-origin: 12px 0; }
.row.head > .tight { letter-spacing: .7px; }
.row.hover { position: relative; background: #e2e5ed; border-bottom-color: #d4d6da; box-shadow: inset 0 -1px #f6f7f9, 0 8px 25px rgba(0, 0, 0, .13); clip-path: inset(0 0 -40px 0); }
.row.hover > div:nth-child(1) { padding-left: 2px; }
.row.hover > div:nth-child(2) { padding-left: 3px; }
.row.hover > div:nth-child(3) { padding-left: 7px; }
.row.hover > div:nth-child(5) { padding-left: 15px; }
.row.hover > div:nth-child(6) { padding-left: 17px; }
.name, .prog { transform: scaleX(1.08); transform-origin: 12px 0; letter-spacing: .4px; }
.prog { letter-spacing: .8px; }
.prog.narrow { letter-spacing: .45px; }
.prog.wide { letter-spacing: 1.400px; }
.row span { letter-spacing: .8px; transform: scaleX(1.08); transform-origin: left; }
.row .tek span { letter-spacing: .5px; }
.row .ked span { letter-spacing: .65px; }
.row svg { height: 24px; margin: 4px 7px 0 0; }
.eko { color: #198754; } .eko svg { width: 24px; }
.tek { color: #0d6efd; } .tek svg { width: 30px; }
.huk { color: #ffc107; } .huk svg { width: 30px; }
.ked { color: #dc3545; } .ked svg { width: 21px; }
.badge { display: block; height: 46px; margin-top: 3px; padding-left: 29px; border-radius: 23px; color: #fff; font-size: 17.500px; line-height: 46px; font-weight: 550; letter-spacing: 1.600px; box-shadow: 0 3px 8px rgba(0, 0, 0, .14); }
.yes { background: #198754; width: 155px; }
.no { background: #dc3545; width: 145px; }
.hover .no { width: 147px; }

/* Scrollbars */
.vscroll { display: flex; flex-direction: column; align-items: center; width: 23px; background: #2c2c2c; padding: 6px 0 5px; }
.vscroll i { width: 13px; height: 92px; margin: auto 0 13px; border-radius: 7px; background: #9f9f9f; }
.hscroll { display: flex; align-items: center; height: 24px; flex: none; padding: 1px 0 0 6px; background: #2c2c2c; border-bottom: 2px solid #404040; }
.hscroll i { flex: none; width: 1826px; height: 13px; margin: 0 27px 0 9px; border-radius: 7px; background: #9f9f9f; }

/* Taskbar */
.taskbar { display: flex; height: 70px; flex: none; background: #1c1c1c; }
.weather { display: flex; width: 494px; padding: 19px 0 0 29px; gap: 11px; font-size: 17.500px; line-height: 24px; letter-spacing: -.6px; }
.weather > div { margin-top: -10px; }
.cond { color: #cfcfcf; letter-spacing: -.2px; }
.apps { display: flex; }
.app { position: relative; width: 66px; height: 70px; display: grid; place-items: center; padding-bottom: 1px; }
.find { display: flex; align-items: center; width: 330px; height: 48px; margin: 10px 3px 0 5px; padding: 0 10px 0 16px; border: 2px solid #505050; border-radius: 24px; background: #3b3b3b; }
.find span { margin: 0 auto 0 15px; font-size: 19px; letter-spacing: -.1px; color: #d6d6d6; }
.trees { margin-right: -2px; }
.dot { position: absolute; left: 29px; bottom: 7px; width: 9px; height: 5px; border-radius: 3px; background: #9b9b9b; }
.count { position: absolute; left: 26px; top: 9px; width: 40px; height: 24px; border-radius: 12px 8px 8px 12px; background: #73d3dc; color: #111; font-size: 16px; font-weight: 400; line-height: 24px; text-align: center; letter-spacing: -.2px; }
.current::before { content: ""; position: absolute; left: 3px; top: 4px; width: 60px; height: 60px; border: 2px solid #303030; border-radius: 7px; background: #292929; }
.current svg { position: relative; }
.current .mini { position: absolute; left: 35px; top: 9px; }
.current .dot { left: 21px; width: 24px; background: #73d3dc; }
.tray { display: flex; margin-left: auto; padding-right: 29px; font-size: 17.500px; }
.chev { margin-top: 28px; }
.lang { margin: 22px 27px 0 31px; line-height: 24px; letter-spacing: -.5px; }
.wifi { margin-top: 24px; }
.vol { margin: 23px 12px 0; }
.batt { margin-top: 22px; }
.clock { width: 118px; margin-top: 10px; line-height: 23.500px; letter-spacing: 0; text-align: right; }
```
